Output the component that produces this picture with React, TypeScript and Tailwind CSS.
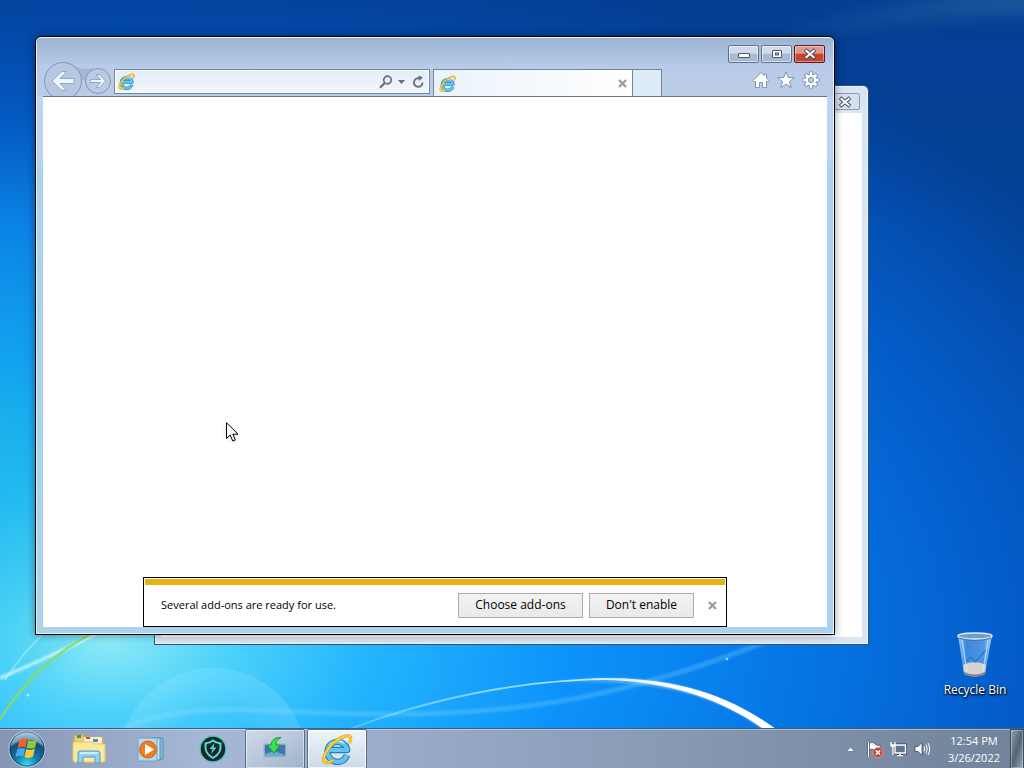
import type { ReactNode } from "react";

function Wallpaper() {
  return (
    <svg
      className="absolute inset-0 h-full w-full"
      viewBox="0 0 1024 768"
      preserveAspectRatio="none"
      aria-hidden="true"
    >
      <defs>
        <radialGradient id="sky" gradientUnits="userSpaceOnUse" cx="110" cy="640" r="1150" gradientTransform="translate(110 640) scale(1 0.62) translate(-110 -640)">
          <stop offset="0" stopColor="#8deaf6" />
          <stop offset="0.1" stopColor="#4ed2fb" />
          <stop offset="0.22" stopColor="#25b6fd" />
          <stop offset="0.4" stopColor="#0c93fb" />
          <stop offset="0.58" stopColor="#0678e8" />
          <stop offset="0.78" stopColor="#045dca" />
          <stop offset="0.92" stopColor="#044cab" />
          <stop offset="1" stopColor="#034296" />
        </radialGradient>
        <radialGradient id="leftTint">
          <stop offset="0" stopColor="#1fc0d8" stopOpacity="0.45" />
          <stop offset="1" stopColor="#1fc0d8" stopOpacity="0" />
        </radialGradient>
        <linearGradient id="topShade" x1="0" y1="0" x2="0" y2="1">
          <stop offset="0" stopColor="#033a90" stopOpacity="0.5" />
          <stop offset="1" stopColor="#033a90" stopOpacity="0" />
        </linearGradient>
        <radialGradient id="bubble">
          <stop offset="0.5" stopColor="#fff" stopOpacity="0" />
          <stop offset="1" stopColor="#c8f6ff" stopOpacity="0.16" />
        </radialGradient>
        <linearGradient id="topLight" x1="0" y1="0" x2="1" y2="0">
          <stop offset="0" stopColor="#3e7fa8" stopOpacity="0" />
          <stop offset="1" stopColor="#3e7fa8" stopOpacity="0.4" />
        </linearGradient>
        <linearGradient id="arc" x1="0" y1="0" x2="1" y2="0">
          <stop offset="0" stopColor="#fff" stopOpacity="0.2" />
          <stop offset="0.5" stopColor="#d8f6ff" stopOpacity="0.8" />
          <stop offset="0.8" stopColor="#fff" />
        </linearGradient>
        <linearGradient id="arcGlow" gradientUnits="userSpaceOnUse" x1="560" y1="0" x2="720" y2="0">
          <stop offset="0" stopColor="#fff" stopOpacity="0" />
          <stop offset="1" stopColor="#fff" stopOpacity="0.75" />
        </linearGradient>
        <filter id="soft" x="-10%" y="-20%" width="120%" height="140%">
          <feGaussianBlur stdDeviation="1" />
        </filter>
        <filter id="haze" x="-10%" y="-60%" width="130%" height="220%">
          <feGaussianBlur stdDeviation="7" />
        </filter>
      </defs>
      <rect width="1024" height="768" fill="url(#sky)" />
      <ellipse cx="0" cy="430" rx="120" ry="320" fill="url(#leftTint)" />
      <rect width="1024" height="220" fill="url(#topShade)" />
      <path d="M740 44C830 14 930 -8 1060 -20V14C940 16 830 34 740 50Z" fill="url(#topLight)" filter="url(#haze)" />
      <circle cx="213" cy="762" r="94" fill="url(#bubble)" />
      <path d="M120 730C180 702 240 710 330 713C500 720 620 700 770 640" fill="none" stroke="#9be4ff" strokeOpacity="0.25" strokeWidth="5" filter="url(#soft)" />
      <path d="M350 728C440 693 530 680 604 678C668 678 726 691 780 732L768 732C720 697 665 681 604 680C530 681 440 696 350 730Z" fill="url(#arc)" />
      <path d="M540 683C668 671 724 697 772 732" fill="none" stroke="url(#arcGlow)" strokeWidth="5" filter="url(#soft)" />
      <path d="M0 678C35 663 65 650 100 632" fill="none" stroke="#e4fcff" strokeOpacity="0.8" strokeWidth="3" filter="url(#soft)" />
      <path d="M5 680C18 660 30 645 48 630" fill="none" stroke="#d8f8ff" strokeOpacity="0.5" strokeWidth="1.5" />
      <path d="M0 719C25 680 55 652 93 633" fill="none" stroke="#8fdc5a" strokeWidth="2" />
      <circle cx="727" cy="659" r="1.3" fill="#8fdcff" />
      <circle cx="28" cy="695" r="1.5" fill="#c8f6ff" opacity="0.7" />
    </svg>
  );
}

function IeLogo({ className }: { className: string }) {
  return (
    <svg viewBox="0 0 32 32" className={className} aria-hidden="true">
      <path d="M26 22A10 10 0 1 1 26.3 17H8" fill="none" stroke="#1d7fb8" strokeWidth="6.4" strokeLinejoin="round" />
      <path d="M26 22A10 10 0 1 1 26.3 17H8" fill="none" stroke="#62c3ee" strokeWidth="4.2" strokeLinejoin="round" />
      <path d="M8 13A10 10 0 0 1 23 10" fill="none" stroke="#b9ebfc" strokeWidth="1.8" />
      <path d="M28.5 10C31 5 30 1.5 24.5 3C14 6 3 18 2.5 27C2.5 31 7 30.5 12 27" fill="none" stroke="#c9920d" strokeWidth="3" />
      <path d="M28.5 10C31 5 30 1.5 24.5 3C14 6 3 18 2.5 27C2.5 31 7 30.5 12 27" fill="none" stroke="#fbd433" strokeWidth="2" />
    </svg>
  );
}

function CrossGlyph() {
  return (
    <svg viewBox="0 0 14 12" className="h-3 w-3.5" aria-hidden="true">
      <path d="M3.5 3L10.5 9M10.5 3L3.5 9" stroke="#42485a" strokeWidth="3.8" strokeLinecap="square" />
      <path d="M3.5 3L10.5 9M10.5 3L3.5 9" stroke="#fff" strokeWidth="2.2" strokeLinecap="square" />
    </svg>
  );
}

function SmallCross() {
  return (
    <svg viewBox="0 0 9 9" className="h-[9px] w-[9px]" aria-hidden="true">
      <path d="M1 1L8 8M8 1L1 8" stroke="#9a9a9a" strokeWidth="2.2" />
    </svg>
  );
}

const captionButton =
  "flex h-[18px] w-[31px] items-center justify-center rounded-xs border border-[#63738c] bg-linear-to-b from-[#d0dcec] from-45% to-[#a9bad3] to-50% inset-ring inset-ring-white/50";

function CaptionButtons() {
  return (
    <div className="flex justify-end gap-[2px] pr-0.5">
      <button type="button" aria-label="Minimize" className={captionButton}>
        <svg viewBox="0 0 12 10" className="h-2.5 w-3">
          <rect x="0.5" y="4.5" width="11" height="4" rx="0.5" fill="#fff" stroke="#4b556b" />
        </svg>
      </button>
      <button type="button" aria-label="Maximize" className={captionButton}>
        <svg viewBox="0 0 12 10" className="h-2.5 w-3">
          <rect x="1.5" y="1.5" width="9" height="7" rx="0.5" fill="#fff" stroke="#4b556b" />
          <rect x="4.5" y="4" width="3" height="2" fill="#b6c8df" stroke="#4b556b" />
        </svg>
      </button>
      <button
        type="button"
        aria-label="Close"
        className="flex h-[18px] w-[31px] items-center justify-center rounded-xs border border-[#5b1b1e] bg-linear-to-b from-[#e09a8d] from-45% to-[#c8442f] to-50% inset-ring inset-ring-white/40"
      >
        <CrossGlyph />
      </button>
    </div>
  );
}

function NavButtons() {
  return (
    <div className="flex items-center gap-[3px] pl-px">
      <button type="button" aria-label="Back" className="h-[38px] w-[38px]">
        <svg viewBox="0 0 38 38" className="h-full w-full overflow-visible">
          <path d="M25 1Q36 9 50 6L42 18H36Z" fill="#8fa5c3" opacity="0.55" />
          <circle cx="19" cy="19" r="18.5" fill="#b6c8e1" stroke="#8197b4" />
          <path d="M8 19L18 9.5H22.5L16 16.5H30V21.5H16L22.5 28.5H18Z" fill="#eef5fd" stroke="#8ea8c8" />
        </svg>
      </button>
      <button type="button" aria-label="Forward" className="h-[26px] w-[26px]">
        <svg viewBox="0 0 26 26" className="h-full w-full">
          <circle cx="13" cy="13" r="12.5" fill="#b9cae3" stroke="#8197b4" />
          <path d="M20.5 13L14.5 6.5H11.5L15.5 11.5H5.5V14.5H15.5L11.5 19.5H14.5Z" fill="#eef5fd" stroke="#8ea8c8" />
        </svg>
      </button>
    </div>
  );
}

function AddressBar() {
  return (
    <div className="flex h-[25px] min-w-0 items-center border border-[#6f8a9c] bg-linear-to-b from-[#e4edf8] to-[#f1f6fc] pr-1 pl-[3px] inset-ring inset-ring-white">
      <IeLogo className="h-[17px] w-[17px] shrink-0" />
      <input aria-label="Address" type="text" className="h-5 min-w-0 flex-1 bg-transparent px-1 text-xs outline-none" />
      <button type="button" aria-label="Search" className="px-0.5">
        <svg viewBox="0 0 14 14" className="h-3.5 w-3.5" fill="none" stroke="#68707e">
          <circle cx="8.5" cy="5" r="3.8" strokeWidth="1.7" />
          <path d="M5.7 8L1 12.8" strokeWidth="2.2" />
        </svg>
      </button>
      <button type="button" aria-label="Show address list" className="px-[3px]">
        <svg viewBox="0 0 7 4" className="h-1 w-[7px]">
          <path d="M0 0H7L3.5 4Z" fill="#68707e" />
        </svg>
      </button>
      <button type="button" aria-label="Refresh" className="pl-[3px]">
        <svg viewBox="0 0 14 14" className="h-3.5 w-3.5">
          <path d="M8.5 3.4A4.3 4.3 0 1 0 11.5 7.5" fill="none" stroke="#68707e" strokeWidth="1.9" />
          <path d="M7.5 0.5L12 2.5L8 6Z" fill="#68707e" />
        </svg>
      </button>
    </div>
  );
}

function CommandIcons() {
  return (
    <div className="flex h-[25px] items-center gap-[7px] pr-[7px]">
      <button type="button" aria-label="Home">
        <svg viewBox="0 0 18 18" className="h-[18px] w-[18px]" fill="#fff" stroke="#8094ae">
          <path d="M9 1.5L1 9.5L2.5 11L3.5 10V16.5H7.5V11.5H10.5V16.5H14.5V10L15.5 11L17 9.5L14.5 7V3H12V4.5Z" />
        </svg>
      </button>
      <button type="button" aria-label="Favorites">
        <svg viewBox="0 0 18 18" className="h-[18px] w-[18px]" fill="#fff" stroke="#8094ae">
          <path d="M9 0.8L11.2 6.5L17.3 6.7L12.5 10.6L14.2 16.6L9 13.2L3.8 16.6L5.5 10.6L0.7 6.7L6.8 6.5Z" />
        </svg>
      </button>
      <button type="button" aria-label="Tools">
        <svg viewBox="0 0 18 18" className="h-[18px] w-[18px]">
          <g stroke="#8094ae" strokeWidth="4.2">
            <path d="M9 0.5V17.5M0.5 9H17.5M3 3L15 15M15 3L3 15" />
          </g>
          <circle cx="9" cy="9" r="6" fill="#8094ae" />
          <g stroke="#fff" strokeWidth="2.4">
            <path d="M9 1.3V16.7M1.3 9H16.7M3.6 3.6L14.4 14.4M14.4 3.6L3.6 14.4" />
          </g>
          <circle cx="9" cy="9" r="5.2" fill="#fff" />
          <circle cx="9" cy="9" r="2.7" fill="#bccde4" stroke="#8094ae" />
        </svg>
      </button>
    </div>
  );
}

function AddOnBar() {
  return (
    <div role="alert" className="mx-[100px] border border-black bg-white p-px">
      <div className="h-1.5 bg-[#e9b20f]" />
      <div className="flex h-10 items-center gap-1.5 pr-2 pl-4">
        <p className="flex-1 text-[11px] leading-4">Several add-ons are ready for use.</p>
        <button type="button" className="h-[25px] w-[125px] border border-[#ababab] bg-linear-to-b from-[#f3f3f3] to-[#e9e9e9] text-[12px] leading-4">
          Choose add-ons
        </button>
        <button type="button" className="h-[25px] w-[105px] border border-[#ababab] bg-linear-to-b from-[#f3f3f3] to-[#e9e9e9] text-[12px] leading-4">
          Don't enable
        </button>
        <button type="button" aria-label="Close notification" className="ml-2">
          <SmallCross />
        </button>
      </div>
    </div>
  );
}

function BrowserWindow() {
  return (
    <section
      aria-label="Internet Explorer"
      className="absolute top-9 right-[189px] bottom-[93px] left-[35px] flex flex-col rounded-t-md border border-black bg-linear-to-b from-[#c6d3ee] from-0% via-[#bdd3ee] via-20% to-[#abd3ee] to-22% px-[7px] pb-[7px] shadow-[0_0_8px_rgba(0,0,0,0.4)] inset-ring inset-ring-white/70"
    >
      <div className="-mx-[6px] mt-px flex flex-col rounded-t-sm bg-linear-to-b from-[#9cb3d2] via-[#b9cbe9] via-50% to-[#b8cde6] px-[6px] pt-[7px]">
        <CaptionButtons />
        <div className="-mt-px flex h-[34px] items-start overflow-hidden">
          <NavButtons />
          <div className="grid min-w-0 flex-1 grid-cols-[316fr_229fr_162fr] items-start gap-[3px] pt-[7px] pl-[3px]">
            <AddressBar />
            <div className="flex h-7">
              <div className="flex flex-1 items-center border border-b-0 border-[#6f8a9c] bg-linear-to-r from-[#eaf3fa] to-white px-[5px]">
                <IeLogo className="h-[17px] w-[17px]" />
                <button type="button" aria-label="Close tab" className="ml-auto">
                  <SmallCross />
                </button>
              </div>
              <button
                type="button"
                aria-label="New tab"
                className="w-[29px] border-t border-r border-[#6f8a9c] bg-[#deebf9]"
              />
            </div>
            <div className="-mt-0.5 flex justify-end">
              <CommandIcons />
            </div>
          </div>
        </div>
      </div>
      <div className="flex flex-1 flex-col justify-end border-t border-[#65788c] bg-white">
        <AddOnBar />
      </div>
    </section>
  );
}

function BackgroundWindow() {
  return (
    <section
      aria-label="Inactive window"
      className="absolute top-[85px] right-[155px] bottom-[83px] left-[154px] flex flex-col rounded-t-md border border-[#2f5378] bg-[#d8e5f2] px-1.5 pb-[7px] inset-ring inset-ring-white/50"
    >
      <div className="flex h-[27px] items-center justify-end pt-1 pr-0.5">
        <button
          type="button"
          aria-label="Close inactive window"
          className="flex h-[17px] w-[31px] items-center justify-center rounded-xs border border-[#8b9bb0] bg-[#d4e0ec]"
        >
          <CrossGlyph />
        </button>
      </div>
      <div className="flex-1 bg-white" />
    </section>
  );
}

function RecycleBin() {
  return (
    <button
      type="button"
      className="absolute right-[9px] bottom-[30px] flex w-20 flex-col items-center gap-1 text-[12px] leading-4 text-white [text-shadow:0_1px_2px_#000,1px_1px_2px_#000]"
    >
      <svg viewBox="0 0 40 48" className="h-12 w-10" aria-hidden="true">
        <defs>
          <linearGradient id="glass" x1="0" y1="0" x2="1" y2="0">
            <stop offset="0" stopColor="#b9dcf6" stopOpacity="0.85" />
            <stop offset="0.25" stopColor="#5a9fe6" stopOpacity="0.65" />
            <stop offset="0.75" stopColor="#6faeed" stopOpacity="0.7" />
            <stop offset="1" stopColor="#c2e2fa" stopOpacity="0.85" />
          </linearGradient>
        </defs>
        <path d="M3 5L9 44Q20 49 30 44L37 5Z" fill="url(#glass)" />
        <path d="M8 35Q19 29 31 35L30 44Q20 49 9 44Z" fill="#d6d2cf" />
        <path d="M9 42Q20 47 30 42V44Q20 49 9 44Z" fill="#8b7f86" />
        <path d="M11 31L16 27L20 32L31 20" fill="none" stroke="#2f70c2" strokeWidth="1.2" />
        <path d="M7 10L12 42M33 10L28 42" stroke="#d9efff" strokeOpacity="0.6" strokeWidth="1.5" />
        <ellipse cx="20" cy="6" rx="17" ry="3" fill="#6d9fce" stroke="#dce9f3" strokeWidth="1.5" />
        <path d="M4 8Q20 13 36 8" fill="none" stroke="#51718f" />
      </svg>
      <span className="whitespace-nowrap">Recycle Bin</span>
    </button>
  );
}

function StartOrb() {
  return (
    <svg viewBox="0 0 38 38" className="h-[38px] w-[38px]" aria-hidden="true">
      <defs>
        <radialGradient id="orb" cx="0.5" cy="0.95" r="0.9">
          <stop offset="0" stopColor="#3fe0f8" />
          <stop offset="0.35" stopColor="#127fb2" />
          <stop offset="0.7" stopColor="#174b78" />
          <stop offset="1" stopColor="#8db3cf" />
        </radialGradient>
      </defs>
      <circle cx="19" cy="19" r="18" fill="url(#orb)" stroke="#b9d6e6" strokeWidth="1" />
      <circle cx="19" cy="19" r="17" fill="none" stroke="#1d4260" strokeWidth="0.8" />
      <path d="M3 16Q19 3 35 16Q32 2 19 2Q6 2 3 16Z" fill="#fff" opacity="0.3" />
      <path d="M11.5 10Q15 7.5 19 9.5L17.5 17.5Q13.5 16 9.5 18Z" fill="#ee6426" />
      <path d="M20 10Q24.5 12 29 9.5L27 17.5Q23 19.5 18.5 17.8Z" fill="#8fc83d" />
      <path d="M9.3 19Q13 17 17.2 18.8L15.5 26.5Q12 24.8 7.5 27Z" fill="#49a8e8" />
      <path d="M18.3 19Q22.5 21 26.8 18.6L25 26.5Q21 29 16.5 27Z" fill="#fdc938" />
    </svg>
  );
}

function ExplorerIcon() {
  return (
    <svg viewBox="0 0 34 30" className="h-[30px] w-[34px]" aria-hidden="true">
      <path d="M2 3Q2 1 4 1H11L13 4H31V28H2Z" fill="#e7cc73" stroke="#c8a954" />
      <rect x="5" y="1" width="4" height="3" fill="#3f9b48" />
      <path d="M12 3H30V10H12Z" fill="#fff6cf" stroke="#d3ba6a" strokeWidth="0.7" />
      <rect x="14" y="3" width="4" height="2" fill="#cf4936" />
      <rect x="21" y="5" width="5" height="3" fill="#3e8fd1" />
      <path d="M1 8H20L22 10H33V27Q33 28 31 28H3Q1 28 1 26Z" fill="#fae99d" stroke="#dfc66f" />
      <path d="M6 29V19Q6 17 8 17H25Q28 17 28 19V29H23V23H11V29Z" fill="#91d1ec" stroke="#529fca" />
      <path d="M8 19H26" stroke="#e1f7ff" strokeWidth="1.5" />
    </svg>
  );
}

function MediaPlayerIcon() {
  return (
    <svg viewBox="0 0 28 26" className="h-[26px] w-7" aria-hidden="true">
      <path d="M16 2H26V23H16Z" fill="#88bbd9" stroke="#5592b8" />
      <path d="M10 2H23V24H10Z" fill="#c4e3f2" stroke="#5592b8" />
      <path d="M1 2H20V25H1Z" fill="#b6d8ec" stroke="#6ba4c5" />
      <circle cx="11" cy="13.5" r="8.5" fill="#ef7d20" stroke="#cf6617" />
      <path d="M8 8L17 13.5L8 19Z" fill="#fff" />
    </svg>
  );
}

function ShieldIcon() {
  return (
    <svg viewBox="0 0 28 28" className="h-7 w-7" aria-hidden="true">
      <circle cx="14" cy="14" r="12.8" fill="#182635" stroke="#42c9ae" strokeWidth="1.2" />
      <path d="M6.5 8.5Q11 8 14 5.5Q17 8 21.5 8.5V13Q21 19 14 23Q7 19 6.5 13Z" fill="none" stroke="#54e0b5" strokeWidth="2" />
      <path d="M15.5 8L10.5 14H13.5L12 19L17.5 12.5H14.5Z" fill="#54e0b5" />
    </svg>
  );
}

function InstallerIcon() {
  return (
    <svg viewBox="0 0 26 24" className="h-6 w-[26px]" aria-hidden="true">
      <path d="M2 7H24V20H2Z" fill="#3d78ad" stroke="#a9bccb" strokeWidth="1.5" />
      <path d="M3 17L12 14L23 18V19H3Z" fill="#6fa7ce" />
      <path d="M19 0.5Q10 0 9 8H5L12 16L18 8H14Q13 4 19 0.5Z" fill="#3ce04f" stroke="#199d38" />
    </svg>
  );
}

function TaskButton({ label, className, children }: { label: string; className?: string; children: ReactNode }) {
  return (
    <button type="button" aria-label={label} className={`flex h-10 w-[60px] items-center justify-center ${className ?? ""}`}>
      {children}
    </button>
  );
}

function Tray() {
  return (
    <div className="ml-auto flex items-center">
      <button type="button" aria-label="Show hidden icons" className="mr-[11px]">
        <svg viewBox="0 0 9 6" className="h-1.5 w-[9px]">
          <path d="M0.5 5.5L4.5 1L8.5 5.5Z" fill="#fff" stroke="#4b5a70" strokeWidth="0.6" />
        </svg>
      </button>
      <button type="button" aria-label="Action Center" className="mr-1.5">
        <svg viewBox="0 0 18 18" className="h-[18px] w-[18px]">
          <path d="M2.5 2V17" stroke="#2d3b4e" strokeWidth="3" />
          <path d="M2.5 2V17" stroke="#fff" strokeWidth="1.5" />
          <path d="M3.5 3Q7 1.5 9 4T14 5V11Q11 12 8.5 10T3.5 10Z" fill="#fff" stroke="#34445a" strokeWidth="0.6" />
          <circle cx="12" cy="12.5" r="5" fill="#d6302c" stroke="#f0b0aa" strokeWidth="0.7" />
          <path d="M9.8 10.3L14.2 14.7M14.2 10.3L9.8 14.7" stroke="#fff" strokeWidth="1.7" />
        </svg>
      </button>
      <button type="button" aria-label="Network" className="mr-[7px]">
        <svg viewBox="0 0 17 16" className="h-4 w-[17px]" fill="none">
          <path d="M5 4H15.5V12H5ZM10 12V14.5M7 14.5H13" stroke="#334155" strokeWidth="3" />
          <path d="M5 4H15.5V12H5Z" fill="#64758b" stroke="#fff" strokeWidth="1.4" />
          <path d="M10 12V14.5M7 14.8H13" stroke="#fff" strokeWidth="1.4" />
          <path d="M1 1V4Q1 5.5 3 5.5T5 4V1M3 5.5V14M1 4H5" stroke="#fff" strokeWidth="1.3" />
        </svg>
      </button>
      <button type="button" aria-label="Volume" className="mr-[17px]">
        <svg viewBox="0 0 17 16" className="h-4 w-[17px]">
          <path d="M1 5.5H4L8 1.5V14.5L4 10.5H1Z" fill="#fff" stroke="#36455a" strokeWidth="0.8" />
          <path d="M10 5.5Q11.5 8 10 10.5M12 3.5Q14.5 8 12 12.5M14 2Q17.5 8 14 14" fill="none" stroke="#fff" />
        </svg>
      </button>
      <div className="mr-2.5 text-center text-[11px] leading-[17px] text-white">
        <div>12:54 PM</div>
        <div>3/26/2022</div>
      </div>
      <button
        type="button"
        aria-label="Show desktop"
        className="h-10 w-3.5 border border-[#3e4e60] bg-linear-to-br from-[#92a0b0] via-[#526475] to-[#9aa9b9] inset-ring inset-ring-white/30"
      />
    </div>
  );
}

function Taskbar() {
  return (
    <footer className="relative flex h-10 items-center border-t border-[#35618a] bg-linear-to-r from-[#8695b4] via-[#a7b8d6] via-20% to-[#70839a] inset-shadow-[0_1px_0_rgba(255,255,255,0.35)]">
      <button type="button" aria-label="Start" className="mr-[9px] ml-2">
        <StartOrb />
      </button>
      <div className="flex gap-0.5">
        <TaskButton label="Windows Explorer">
          <div className="pl-2">
            <ExplorerIcon />
          </div>
        </TaskButton>
        <TaskButton label="Windows Media Player">
          <div className="pl-2">
            <MediaPlayerIcon />
          </div>
        </TaskButton>
        <TaskButton label="Security" className="mr-1">
          <div className="pl-2">
            <ShieldIcon />
          </div>
        </TaskButton>
        <TaskButton label="Installer" className="rounded-xs border border-[#5a6e88] bg-linear-to-br from-[#d0dbe9] to-[#9fb3cc] inset-ring inset-ring-white/50">
          <InstallerIcon />
        </TaskButton>
        <TaskButton label="Internet Explorer" className="rounded-xs border border-[#5a6e88] bg-linear-to-b from-[#f0f5fa] to-[#ccd9e7] inset-ring inset-ring-white/80">
          <IeLogo className="h-8 w-8" />
        </TaskButton>
      </div>
      <Tray />
    </footer>
  );
}

function Cursor() {
  return (
    <svg viewBox="0 0 14 21" className="absolute top-[422px] left-[226px] h-[21px] w-3.5 drop-shadow-sm" aria-hidden="true">
      <path d="M0.5 0.8V16.5L4.2 13L6.8 19L9.3 18L6.8 12.2H12Z" fill="#fff" stroke="#000" />
    </svg>
  );
}

export default function App() {
  return (
    <div className="relative flex h-screen flex-col overflow-hidden font-['Open_Sans','Noto_Sans',sans-serif] text-black">
      <Wallpaper />
      <main className="relative flex-1">
        <BackgroundWindow />
        <BrowserWindow />
        <RecycleBin />
        <Cursor />
      </main>
      <Taskbar />
    </div>
  );
}
